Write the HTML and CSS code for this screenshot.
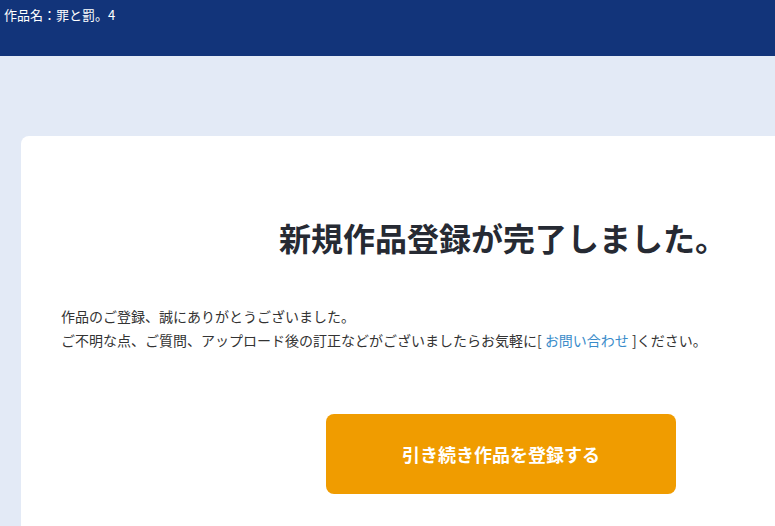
FILE: index.html
```html
<!DOCTYPE html>
<html lang="ja">
<head>
	<meta charset="UTF-8" />
	<meta name="viewport" content="width=device-width, initial-scale=1.0" />
	<title>作品登録完了</title>
	<link rel="stylesheet" href="styles.css">
</head>
<body>
	<header class="site-header">
		<p class="work-name">作品名：罪と罰。4</p>
	</header>

	<main class="page">
		<section class="done-card">
			<h1 class="done-title">新規作品登録が完了しました。</h1>
			<p class="done-text">
				作品のご登録、誠にありがとうございました。<br>
				ご不明な点、ご質問、アップロード後の訂正などがございましたらお気軽に[ <a href="#" class="contact-link">お問い合わせ</a> ]ください。
			</p>
			<a href="#" class="next-button">引き続き作品を登録する</a>
		</section>
	</main>
</body>
</html>
```

FILE: styles.css
```css
html, body {
	margin: 0;
	padding: 0;
}
body {
	font-family: "Noto Sans CJK JP", "Noto Sans", sans-serif;
	background-color: #e3eaf6;
	color: #333;
	height: 100vh;
	display: flex;
	flex-direction: column;
	overflow: hidden;
}
.site-header {
	background-color: #12347a;
	height: 56px;
	flex-shrink: 0;
	padding: 6px 4px 0 4px;
	box-sizing: border-box;
}
.work-name {
	margin: 0;
	color: #fff;
	font-size: 13px;
	line-height: 18px;
}
.page {
	flex: 1;
	display: flex;
	padding: 80px 0 0 21px;
}
.done-card {
	flex: 1;
	background-color: #fff;
	border-radius: 8px 0 0 0;
	padding-top: 80px;
}
.done-title {
	margin: 0;
	padding-left: 210px;
	text-align: center;
	font-size: 32px;
	line-height: 42px;
	font-weight: bold;
	color: #262a33;
}
.done-text {
	margin: 46px 0 0 40px;
	font-size: 14px;
	line-height: 24px;
	color: #333;
}
.contact-link {
	color: #3a8cca;
	text-decoration: none;
}
.next-button {
	display: flex;
	align-items: center;
	justify-content: center;
	width: 350px;
	height: 80px;
	margin: 62px 0 0 305px;
	background-color: #f09c00;
	border-radius: 8px;
	color: #fff;
	font-size: 18px;
	font-weight: bold;
	text-decoration: none;
}
```
